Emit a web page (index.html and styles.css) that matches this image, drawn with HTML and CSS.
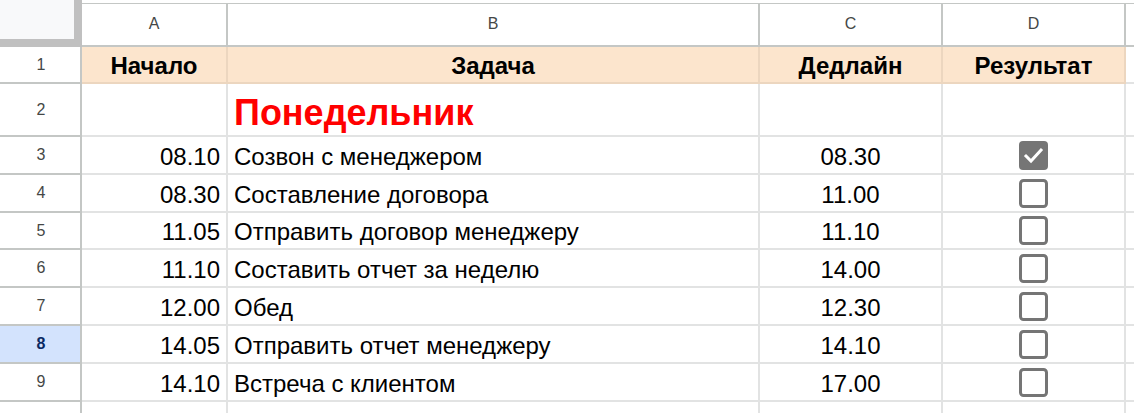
FILE: index.html
```html
<!DOCTYPE html>
<html lang="ru">
<head>
<meta charset="utf-8">
<link rel="stylesheet" href="styles.css">
</head>
<body>
<div class="sheet">
  <div class="corner"></div>
  <div class="colh">A</div>
  <div class="colh">B</div>
  <div class="colh">C</div>
  <div class="colh">D</div>
  <div class="colh colh-e"></div>

  <div class="rowh">1</div>
  <div class="cell head">Начало</div>
  <div class="cell head">Задача</div>
  <div class="cell head">Дедлайн</div>
  <div class="cell head">Результат</div>
  <div class="cell"></div>

  <div class="rowh">2</div>
  <div class="cell"></div>
  <div class="cell day">Понедельник</div>
  <div class="cell"></div>
  <div class="cell"></div>
  <div class="cell"></div>

  <div class="rowh">3</div>
  <div class="cell num">08.10</div>
  <div class="cell txt">Созвон с менеджером</div>
  <div class="cell mid">08.30</div>
  <div class="cell mid"><svg class="cb" viewBox="0 0 29 29"><rect x="0" y="0" width="29" height="29" rx="4" fill="#757575"/><path d="M7 15l5 5 10-11" fill="none" stroke="#fff" stroke-width="3" stroke-linecap="square"/></svg></div>
  <div class="cell"></div>

  <div class="rowh">4</div>
  <div class="cell num">08.30</div>
  <div class="cell txt">Составление договора</div>
  <div class="cell mid">11.00</div>
  <div class="cell mid"><svg class="cb" viewBox="0 0 29 29"><rect x="1.5" y="1.5" width="26" height="26" rx="3" fill="none" stroke="#757575" stroke-width="3"/></svg></div>
  <div class="cell"></div>

  <div class="rowh">5</div>
  <div class="cell num">11.05</div>
  <div class="cell txt">Отправить договор менеджеру</div>
  <div class="cell mid">11.10</div>
  <div class="cell mid"><svg class="cb" viewBox="0 0 29 29"><rect x="1.5" y="1.5" width="26" height="26" rx="3" fill="none" stroke="#757575" stroke-width="3"/></svg></div>
  <div class="cell"></div>

  <div class="rowh">6</div>
  <div class="cell num">11.10</div>
  <div class="cell txt">Составить отчет за неделю</div>
  <div class="cell mid">14.00</div>
  <div class="cell mid"><svg class="cb" viewBox="0 0 29 29"><rect x="1.5" y="1.5" width="26" height="26" rx="3" fill="none" stroke="#757575" stroke-width="3"/></svg></div>
  <div class="cell"></div>

  <div class="rowh">7</div>
  <div class="cell num">12.00</div>
  <div class="cell txt">Обед</div>
  <div class="cell mid">12.30</div>
  <div class="cell mid"><svg class="cb" viewBox="0 0 29 29"><rect x="1.5" y="1.5" width="26" height="26" rx="3" fill="none" stroke="#757575" stroke-width="3"/></svg></div>
  <div class="cell"></div>

  <div class="rowh rowh-sel">8</div>
  <div class="cell num">14.05</div>
  <div class="cell txt">Отправить отчет менеджеру</div>
  <div class="cell mid">14.10</div>
  <div class="cell mid"><svg class="cb" viewBox="0 0 29 29"><rect x="1.5" y="1.5" width="26" height="26" rx="3" fill="none" stroke="#757575" stroke-width="3"/></svg></div>
  <div class="cell"></div>

  <div class="rowh">9</div>
  <div class="cell num">14.10</div>
  <div class="cell txt">Встреча с клиентом</div>
  <div class="cell mid">17.00</div>
  <div class="cell mid"><svg class="cb" viewBox="0 0 29 29"><rect x="1.5" y="1.5" width="26" height="26" rx="3" fill="none" stroke="#757575" stroke-width="3"/></svg></div>
  <div class="cell"></div>

  <div class="rowh"></div>
  <div class="cell"></div>
  <div class="cell"></div>
  <div class="cell"></div>
  <div class="cell"></div>
  <div class="cell"></div>
</div>
</body>
</html>
```

FILE: styles.css
```css
* { box-sizing: border-box; }
html, body { margin: 0; padding: 0; background: #fff; overflow: hidden; }
body { width: 1134px; height: 413px; font-family: "Liberation Sans", Arial, sans-serif; }

.sheet {
  display: grid;
  grid-template-columns: 82px 146px 532px 183px 183px 1fr;
  grid-template-rows: 47px 37px 53px 38px 38px 37px 38px 38px 38px 38px 38px;
  height: 413px;
  overflow: hidden;
}

.corner {
  background: #f8f9fa;
  border-right: 8px solid #c0c0c0;
  border-bottom: 8px solid #c0c0c0;
}

.colh {
  margin-top: 3px;
  border-top: 1px solid #c4c7c5;
  border-right: 2px solid #c4c7c5;
  border-bottom: 2px solid #c4c7c5;
  display: flex;
  align-items: center;
  justify-content: center;
  font-size: 16px;
  color: #444746;
  padding-bottom: 1px;
}
.colh-e { border-right: none; }

.rowh {
  border-right: 2px solid #c4c7c5;
  border-bottom: 2px solid #c4c7c5;
  display: flex;
  align-items: center;
  justify-content: center;
  font-size: 16px;
  color: #444746;
  padding-left: 2px;
}
.rowh-sel {
  background: #d3e3fd;
  color: #0b2a63;
  font-weight: bold;
}

.cell {
  border-right: 2px solid #e2e3e3;
  border-bottom: 2px solid #e2e3e3;
  display: flex;
  align-items: center;
  font-size: 24px;
  color: #000;
  white-space: nowrap;
  overflow: hidden;
  padding: 3px 6px 0;
}

.head {
  background: #fce5cd;
  border-color: #ecd6bf;
  font-weight: bold;
  justify-content: center;
  padding-top: 2px;
}
.day {
  color: #ff0000;
  font-weight: bold;
  font-size: 36px;
  padding-top: 7px;
}
.num { justify-content: flex-end; }
.txt { justify-content: flex-start; }
.mid { justify-content: center; }
.mid .cb { margin-top: -3px; }

.cb { width: 29px; height: 29px; display: block; }
```
